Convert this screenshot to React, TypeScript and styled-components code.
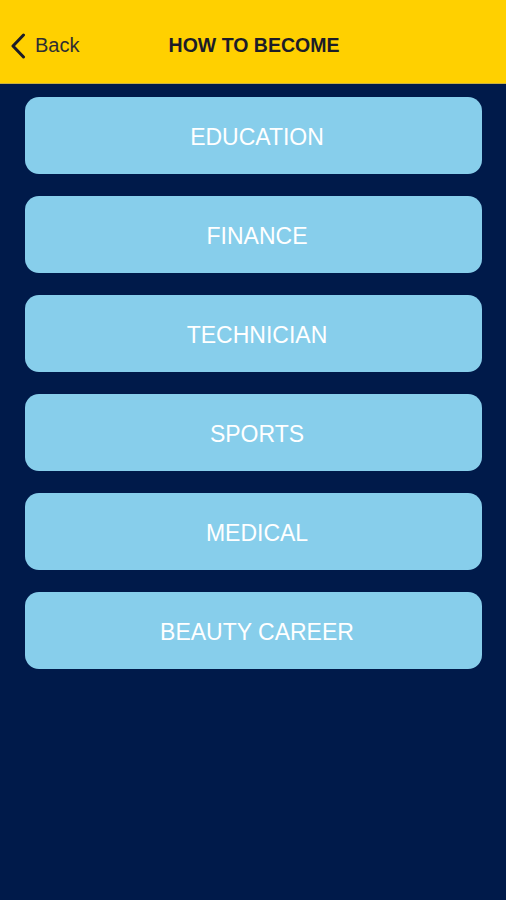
import React from "react";
import styled, { createGlobalStyle } from "styled-components";

const Global = createGlobalStyle`
  html, body { margin: 0; padding: 0; background: #001a4a; }
  body { font-family: "Liberation Sans", Arial, sans-serif; }
`;

const Page = styled.div`
  width: 506px;
  height: 900px;
  background: #001a4a;
  display: flex;
  flex-direction: column;
`;

const Header = styled.header`
  height: 84px;
  box-sizing: border-box;
  background: #ffd000;
  border-bottom: 1px solid #c9b040;
  display: grid;
  grid-template-columns: 1fr auto 1fr;
  align-items: center;
  padding: 8px 10px 0 10px;
`;

const BackButton = styled.button`
  justify-self: start;
  display: flex;
  align-items: center;
  gap: 9px;
  background: none;
  border: none;
  padding: 0;
  color: #2e2e33;
  font-family: "Liberation Sans", Arial, sans-serif;
  font-size: 20px;
`;

const Title = styled.h1`
  margin: 0 0 0 2px;
  font-family: "Liberation Sans", Arial, sans-serif;
  font-weight: 700;
  font-size: 19.5px;
  color: #1c1c28;
`;

const List = styled.div`
  display: flex;
  flex-direction: column;
  gap: 22px;
  padding: 13px 24px 0 25px;
`;

const Item = styled.button`
  height: 77px;
  border: none;
  border-radius: 14px;
  background: #87ceeb;
  color: #ffffff;
  font-family: "Liberation Sans", Arial, sans-serif;
  font-size: 23px;
  font-weight: 400;
  display: flex;
  align-items: center;
  justify-content: center;
  padding: 4px 0 0 7px;
`;

const items = ["EDUCATION", "FINANCE", "TECHNICIAN", "SPORTS", "MEDICAL", "BEAUTY CAREER"];

export default function App() {
  return (
    <Page>
      <Global />
      <Header>
        <BackButton>
          <svg width="16" height="26" viewBox="0 0 16 26" fill="none">
            <path d="M13.5 2 L3 13 L13.5 24" stroke="#1c1c28" strokeWidth="3" strokeLinecap="round" strokeLinejoin="round" />
          </svg>
          Back
        </BackButton>
        <Title>HOW TO BECOME</Title>
        <span />
      </Header>
      <List>
        {items.map((t) => (
          <Item key={t}>{t}</Item>
        ))}
      </List>
    </Page>
  );
}
